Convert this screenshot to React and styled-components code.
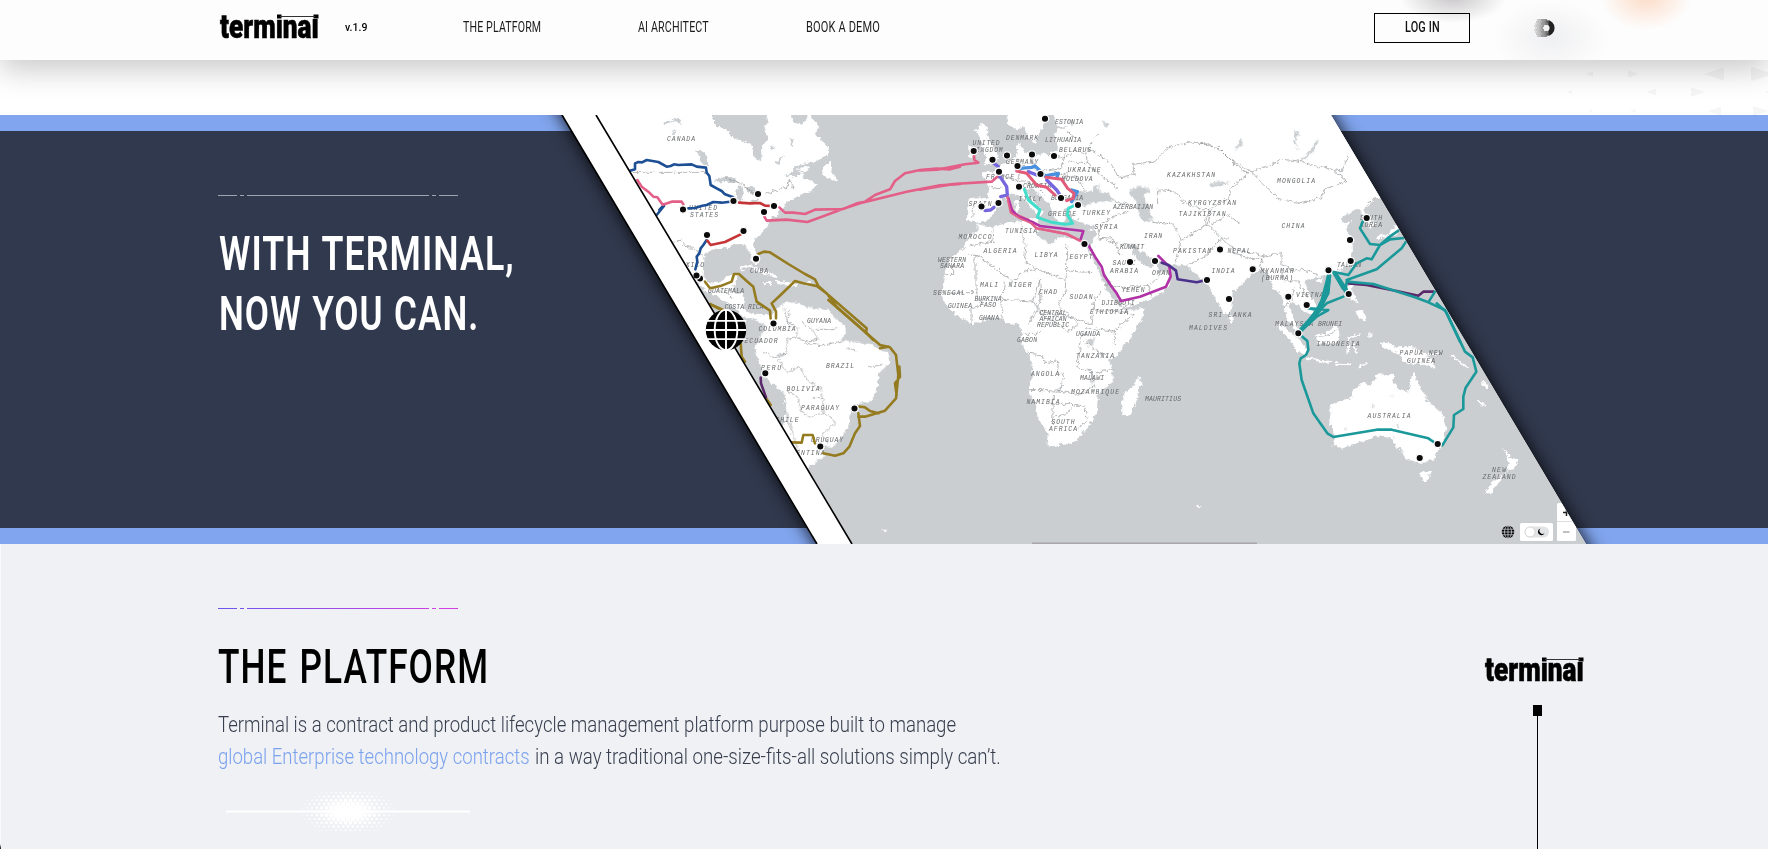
import React, { useLayoutEffect, useRef, useState } from "react";
import styled, { createGlobalStyle } from "styled-components";

const Global = createGlobalStyle`
  * { box-sizing: border-box; }
  body { margin: 0; background: #fff; overflow: hidden; font-family: Roboto, "Liberation Sans", sans-serif; }
  h1, h2, p { margin: 0; font-weight: inherit; }
`;

const Page = styled.div`
  width: 100%;
  height: 849px;
  display: flex;
  flex-direction: column;
  overflow: hidden;
`;

/* Condensed text: the glyphs are squeezed to the given width. */
const FitBox = styled.span`
  display: inline-block;
  width: ${(p) => p.$w}px;
  white-space: nowrap;
  text-align: left;
`;
const FitInner = styled.span`
  display: inline-block;
  transform-origin: 0 50%;
`;
function Fit({ w, children }) {
  const ref = useRef(null);
  const [scale, setScale] = useState(1);
  useLayoutEffect(() => {
    if (ref.current.offsetWidth) setScale(w / ref.current.offsetWidth);
  }, [w]);
  return (
    <FitBox $w={w}>
      <FitInner ref={ref} style={{ transform: `scaleX(${scale})` }}>{children}</FitInner>
    </FitBox>
  );
}

/* ---------- header ---------- */
const Header = styled.header`
  flex: none;
  height: 60px;
  padding: 0 0 6px 220px;
  display: flex;
  align-items: center;
  position: relative;
  z-index: 3;
  box-shadow: 0 10px 30px rgba(0, 0, 0, 0.21);
  background:
    radial-gradient(ellipse 54px 26px at 1453px -3px, rgba(150, 146, 150, 0.5), transparent),
    radial-gradient(ellipse 46px 34px at 1646px -4px, rgba(252, 205, 175, 0.7), transparent),
    radial-gradient(ellipse 58px 38px at 1551px 38px, rgba(230, 231, 234, 0.6), transparent),
    #fdfdfd;
`;
const LogoBox = styled.span`
  display: block;
  position: relative;
  width: 99px;
  height: 28px;
  font: 900 33px/28px Roboto, sans-serif;
  color: #000;
  -webkit-text-stroke: 0.6px #000;
`;
const LogoBar = styled.svg`
  position: absolute;
  left: 0;
  top: -2px;
`;
function Logo({ bg }) {
  return (
    <LogoBox>
      <Fit w={99}>terminal</Fit>
      <LogoBar width="101" height="30" viewBox="0 -2 101 30">
        <path d="M55 -2h8v8h-8zM88 -2h13v8H88z" fill={bg} />
        <path d="M57 1.500h4.500v4H57zM93.500 1.500h5v4h-5z" />
        <path d="M60 3.500H95" stroke="#333" />
      </LogoBar>
    </LogoBox>
  );
}
const Version = styled.span`
  margin-left: 26px;
  width: 96px;
  font-size: 11.5px;
  font-weight: 500;
`;
const Nav = styled.nav`
  display: flex;
  gap: 96.5px;
  margin-left: 22px;
  font-size: 14.3px;
  letter-spacing: 0.2px;
  color: #1c1c1c;
`;
const Login = styled.button`
  margin-left: auto;
  width: 96px;
  height: 30px;
  padding: 0 0 3px;
  margin-top: 2px;
  border: 1px solid #000;
  background: transparent;
  font: 500 14.3px Roboto, sans-serif;
  letter-spacing: 0.2px;
  color: #111;
`;
const Badge = styled.svg`
  display: block;
  margin: 2px 209px 0 61px;
`;
function HalftoneRing() {
  const dots = [];
  for (let y = 0; y < 9; y++)
    for (let x = 0; x < 7; x++) {
      const px = 3 + x * 2 + (y % 2);
      const py = 3 + y * 2;
      const d = Math.hypot(px - 15, py - 11);
      if (d < 11.5 && d > 3.6) dots.push(<circle key={`${x}-${y}`} cx={px} cy={py} r={0.35 + px * 0.05} />);
    }
  return (
    <Badge width="28" height="22" viewBox="0 0 28 22">
      <defs>
        <linearGradient id="ring"><stop offset="0.3" stopColor="#888" stopOpacity="0.1" /><stop offset="0.75" stopColor="#222" /></linearGradient>
      </defs>
      <g fill="#777">{dots}</g>
      <circle cx="15.500" cy="11" r="5.6" fill="none" stroke="url(#ring)" strokeWidth="5" />
    </Badge>
  );
}

const Gap = styled.div`
  flex: none;
  height: 55px;
  display: flex;
  justify-content: flex-end;
`;
function Arrows() {
  const list = [
    [1585, 74, 8, -1], [1628, 74, 11, 1], [1704, 74, 20, -1], [1751, 74, 22, 1],
    [1567, 92, 5, -1], [1646, 92, 10, -1], [1691, 92, 14, 1], [1765, 92, 5, -1],
    [1588, 111, 4, -1], [1630, 111, 6, -1], [1708, 111, 13, -1], [1753, 111, 15, 1],
  ];
  return (
    <svg width="228" height="55" viewBox="1540 60 228 55" fill="#f6f6f6">
      {list.map(([x, y, w, d], i) => (
        <path key={i} d={d > 0 ? `M${x} ${y - w / 3}V${y + w / 3}L${x + w} ${y}z` : `M${x + w} ${y - w / 3}V${y + w / 3}L${x} ${y}z`} />
      ))}
    </svg>
  );
}

/* ---------- hero ---------- */
const Hero = styled.section`
  flex: none;
  height: 429px;
  display: flex;
  overflow: hidden;
  background: linear-gradient(#81a5ee 16px, #31394e 16px, #31394e 413px, #81a5ee 413px);
`;
const HeroCopy = styled.div`
  flex: none;
  width: 540px;
  padding: 80px 0 0 218px;
`;
const HeroTitle = styled.h1`
  padding: 28px 0 0 1px;
  display: flex;
  flex-direction: column;
  font-size: 48px;
  line-height: 60px;
  font-weight: 600;
  letter-spacing: 1.4px;
  word-spacing: 1px;
  color: #fff;
`;
const RuleSvg = styled.svg`
  display: block;
`;
function Rule({ color }) {
  return (
    <RuleSvg width="240" height="1" fill={color} shapeRendering="crispEdges">
      <defs>
        <linearGradient id="violet" gradientUnits="userSpaceOnUse" x1="0" x2="240" y1="0" y2="0">
          <stop stopColor="#6b55ee" /><stop offset="1" stopColor="#d63fe0" />
        </linearGradient>
      </defs>
      <path d="M0 0h19v1H0zM22 0h4v1h-4zM29 0h182v1H29zM214 0h4v1h-4zM221 0h19v1h-19z" />
    </RuleSvg>
  );
}
const MapSvg = styled.svg`
  flex: none;
  display: block;
  overflow: visible;
`;
const MapLabel = styled.text`
  font: italic 6.4px "Liberation Mono", monospace;
  fill: #66686a;
  text-anchor: middle;
`;

const labels = [
  ["CANADA", 681, 139, 28], ["UNITED", 703, 207.5, 28], ["STATES", 704, 214.5, 28], ["MEXICO", 690, 265, 28],
  ["CUBA", 759, 271, 18], ["GUATEMALA", 726, 291, 36], ["COSTA RICA", 744, 307, 39], ["COLOMBIA", 777, 328.5, 37],
  ["GUYANA", 819, 321, 24], ["ECUADOR", 761, 341, 33], ["PERU", 771, 367.5, 20], ["BRAZIL", 840, 366, 28],
  ["BOLIVIA", 803, 388.5, 33], ["PARAGUAY", 820, 408, 38], ["CHILE", 787, 419.5, 23], ["URUGUAY", 827, 440, 32],
  ["ARGENTINA", 803, 452.5, 43], ["UNITED", 986, 142.5, 27], ["KINGDOM", 987, 150, 31], ["DENMARK", 1022, 137.5, 32],
  ["ESTONIA", 1069, 122, 28], ["LITHUANIA", 1063, 140, 36], ["BELARUS", 1075, 149.5, 32], ["GERMANY", 1022, 161.5, 32],
  ["UKRAINE", 1084, 169.5, 33], ["MOLDOVA", 1077, 178.5, 31], ["FRANCE", 1000, 176.5, 28], ["SPAIN", 980, 203.5, 23],
  ["ITALY", 1030, 198.5, 23], ["CROATIA", 1037, 186, 28], ["BULGARIA", 1067, 198, 32], ["GREECE", 1062, 214, 28],
  ["TURKEY", 1096, 212.5, 28], ["AZERBAIJAN", 1133, 207, 40], ["SYRIA", 1106, 227, 23], ["TUNISIA", 1021, 230.5, 32],
  ["MOROCCO", 975, 236.5, 33], ["ALGERIA", 1000, 251, 33], ["LIBYA", 1046, 255, 23], ["EGYPT", 1081, 256.5, 23],
  ["KUWAIT", 1132, 247, 24], ["IRAN", 1153, 235.5, 18], ["KAZAKHSTAN", 1191, 175, 48], ["KYRGYZSTAN", 1212, 203, 48],
  ["TAJIKISTAN", 1202, 213.5, 47], ["PAKISTAN", 1192, 250.5, 38], ["NEPAL", 1239, 250.5, 23], ["SAUDI", 1124, 262.5, 23],
  ["ARABIA", 1124, 270.5, 28], ["OMAN", 1161, 273, 18], ["INDIA", 1223, 270.5, 23], ["YEMEN", 1133, 289.5, 23],
  ["WESTERN", 952, 260, 28], ["SAHARA", 952, 265.5, 24], ["MALI", 989, 285, 18], ["NIGER", 1020, 285, 23],
  ["CHAD", 1048, 291.5, 18], ["SUDAN", 1081, 296.5, 23], ["SENEGAL", 949, 292.5, 32], ["BURKINA", 988, 298.5, 27],
  ["FASO", 988, 304.5, 16], ["GUINEA", 960, 305.5, 24], ["GHANA", 989, 317.5, 20], ["DJIBOUTI", 1118, 302.5, 33],
  ["ETHIOPIA", 1109, 312, 38], ["CENTRAL", 1053, 312.5, 27], ["AFRICAN", 1053, 318.5, 27], ["REPUBLIC", 1053, 324.5, 32],
  ["UGANDA", 1088, 334, 24], ["GABON", 1027, 339.5, 20], ["TANZANIA", 1095, 356, 38], ["SRI LANKA", 1230, 315, 43],
  ["MALDIVES", 1208, 328, 38], ["ANGOLA", 1045, 373.5, 28], ["MALAWI", 1092, 377.5, 24], ["MOZAMBIQUE", 1095, 391.5, 48],
  ["NAMIBIA", 1043, 401.5, 33], ["SOUTH", 1063, 421.5, 23], ["AFRICA", 1063, 429, 28], ["MAURITIUS", 1163, 398.5, 36],
  ["MONGOLIA", 1296, 180.5, 38], ["CHINA", 1293, 225.5, 23], ["MYANMAR", 1277, 270.5, 33], ["(BURMA)", 1277, 277.5, 32],
  ["SOUTH", 1371, 218, 22], ["KOREA", 1371, 224.5, 22], ["TAIWAN", 1349, 265, 24], ["VIETNAM", 1312, 294.5, 32],
  ["MALAYSIA", 1294, 324, 38], ["BRUNEI", 1330, 324, 24], ["INDONESIA", 1338, 344, 43], ["PAPUA NEW", 1421, 353, 43],
  ["GUINEA", 1421, 360.5, 28], ["AUSTRALIA", 1389, 416, 43], ["NEW", 1499, 470, 14], ["ZEALAND", 1499, 477, 33],
];

const ports = [
  [683, 209.5], [733.5, 201], [758, 194], [774, 206], [764, 212], [707, 235], [743.5, 231], [756, 258.7], [700, 278.5], [696.5, 275.5],
  [773.5, 323.5], [765.3, 373.3], [854.5, 408.5], [820.3, 446.5],
  [1045, 118.7], [973.7, 151], [992.5, 159.7], [1007, 155.5], [1032, 154.5], [1054, 156], [1017.5, 166], [999, 171.7], [1040.5, 174],
  [1019, 186.7], [998.5, 203], [981.5, 206.5], [1061, 198], [1078, 205], [1084.5, 244], [1130, 262], [1155, 261], [1220, 249.5],
  [1207, 280], [1229, 299], [1366.7, 218], [1350, 240], [1350.7, 261], [1328.5, 270.3], [1252.7, 269.3], [1288.3, 296.7],
  [1306.7, 305], [1348.7, 294], [1298.3, 333.3], [1437.7, 444], [1419.7, 458],
];

/* Outlines are drawn on sheets with three units to a map pixel. */
const Sheet = ({ x, y, children }) => <g transform={`translate(${x} ${y}) scale(.33333)`}>{children}</g>;

function Land() {
  return (
    <g fill="#fff" filter="url(#coast)">
      <Sheet x={540} y={110}>
        <path d="M60 0H519V42L550 52 580 80 630 100 638 130 650 153 662 145 660 110 680 85 668 50 680 35 672 0H740L755 30 778 44 800 15H808L832 45 822 70 860 105 862 130 820 152 775 160 745 190 790 168 808 172 783 185 790 200 828 218 815 238 780 250 760 262 735 275 725 292 712 300 708 315 690 320 680 345 650 375 636 395 642 425 652 455 640 460 625 425 610 400 580 400 560 412 520 410 495 425 487 450 485 490 500 515 540 520 555 495 588 490 590 505 575 530 580 545 605 545 612 570 605 590 625 605 660 610 700 612 690 640 655 620 620 622 600 610 580 590 540 565 500 545 460 510 300 300Z" />
        <path d="M850 165L870 148 870 172 888 208 870 205 840 190ZM700 15L720 0 760 0 745 22Z" />
        <path d="M598 475L625 466 660 480 705 497M668 517L690 518M705 512L770 522M790 517H808" fill="none" stroke="#fff" strokeWidth="8" />
      </Sheet>
      <Sheet x={640} y={300}>
        <path d="M300 35L345 45 385 65 400 25 430 8 470 5 500 20 560 25 580 50 610 75 612 100 600 118 650 122 700 135 745 160 748 185 715 215 710 260 690 300 655 305 630 330 625 370 590 420 570 440 545 435 548 465 520 490 500 500 480 490 425 380 435 330 430 275 385 245 365 210 345 165 340 140 360 110 372 75 350 60Z" />
        <path d="M724 685L735 687 742 696 732 692Z" />
      </Sheet>
      <Sheet x={920} y={110}>
        <path d="M170 340L205 350 250 338 300 330 345 330 355 345 348 370 385 400 420 375 450 380 480 395 505 398 500 415 520 455 560 540 590 580 615 600 668 590 665 620 630 680 585 735 563 745 575 780 575 810 530 850 528 900 505 945 460 995 420 1003 390 1010 378 995 380 970 350 925 345 880 322 840 335 785 325 730 300 695 300 655 290 640 255 635 240 622 200 625 155 640 110 615 75 585 60 555 65 520 70 490 90 440 130 410 140 380 170 355Z" />
        <path d="M655 795L662 820 640 880 625 915 605 915 602 880 608 845 635 825Z" />
        <path d="M140 265L150 258 200 262 205 225 185 195 180 180 215 185 235 165 265 150 285 135 290 105 300 95 308 120 330 132 380 130 410 118 400 75 410 50 440 50 400 40 402 0H1500V225L1375 262 1350 275 1328 295 1340 320 1365 340 1345 350 1325 325 1318 298 1295 298 1260 320 1262 335 1290 330 1275 355 1290 380 1293 420 1280 465 1225 495 1190 498 1160 505 1150 515 1170 550 1190 590 1170 610 1145 600 1130 580 1110 570 1102 590 1115 620 1140 665 1120 655 1095 615 1090 580 1080 550 1055 530 1045 500 1035 480 1000 480 970 510 935 545 930 600 912 610 890 575 870 540 855 510 820 490 800 465 720 455 690 440 660 420 640 400 625 402 645 440 665 460 690 470 700 455 720 480 750 490 740 530 700 560 640 580 605 590 595 560 570 520 540 470 510 420 510 400 525 370 525 345 485 335 455 320 440 290 425 295 435 320 420 340 400 315 385 280 360 255 335 230 310 235 330 260 350 285 365 300 355 318 330 290 300 255 280 250 245 265 225 290 210 320 190 330 165 338 138 325Z" />
        <path d="M255 0L262 40 285 55 305 45 325 88 342 95 365 50 372 0ZM165 60L185 35 200 60 195 75 220 115 235 145 220 155 185 162 200 140 185 120 180 90ZM145 105L168 110 170 130 145 142ZM320 322L350 322 345 335ZM284 270L294 270 294 305 284 305ZM925 600L938 620 932 635 920 625Z" />
        <path d="M418 355H450M505 360L525 353" fill="none" stroke="#fff" strokeWidth="6" />
        <path d="M825 1182L842 1186 830 1192Z" />
      </Sheet>
      <Sheet x={1200} y={110}>
        <path d="M528 385L535 370 560 372 590 335 600 345 585 370ZM450 448L460 450 455 475 447 468ZM440 520L455 520 458 555 475 575 450 568ZM460 600L485 595 495 630 475 625ZM345 505L365 500 362 515 348 515Z" />
      </Sheet>
      <Sheet x={1200} y={300}>
        <path d="M222 65L250 75 300 120 318 145 313 165 290 150 265 115 240 85ZM342 100L375 97 405 68 420 85 410 120 395 130 350 127ZM535 125L560 122 580 140 625 135 670 155 690 180 702 200 660 190 620 190 590 155 545 138Z" />
        <path d="M315 170L365 180 390 184M400 188L450 190M470 200L500 185M438 155L445 110 480 100M455 125L465 155M508 95V110M680 158L715 158M750 165L800 200M830 296L850 314M845 245L860 262" fill="none" stroke="#fff" strokeWidth="6" />
        <path d="M385 320L400 305 450 290 460 265 490 240 500 255 520 240 530 220 580 222 575 245 590 260 622 272 632 225 637 208 650 245 668 270 680 300 725 340 735 380 725 430 705 455 700 475 655 487 610 470 595 435 590 445 570 410 530 405 490 420 420 440 395 435 400 400 385 360ZM656 512L690 510 682 535 670 542ZM908 442L930 470 952 475 940 500 915 510 925 485ZM912 515L890 550 870 580 850 575 870 550Z" />
      </Sheet>
    </g>
  );
}

function Lakes() {
  return (
    <g fill="#caced1" filter="url(#coast)">
      <Sheet x={540} y={110}>
        <path d="M515 215L545 195 575 195 600 215 560 212ZM582 240L600 222 606 250 598 272 588 265ZM605 225L635 225 650 245 630 250ZM625 270L652 262 645 275ZM465 122L485 118 500 140 502 165 485 160 475 135ZM365 35L420 20 422 45 405 30 370 45ZM250 68L262 85 270 95ZM390 65L415 58 400 72ZM685 110L700 105 695 118ZM745 85L755 80 752 108ZM705 155L730 130 715 162ZM735 195L760 180 790 178 760 198Z" />
      </Sheet>
      <Sheet x={920} y={110}>
        <path d="M455 285L470 240 500 242 520 235 515 228 535 220 530 240 560 245 582 268 520 275 480 288ZM625 242L650 222 690 235 670 252 685 295 695 325 670 335 650 300 645 270ZM495 685L520 682 515 705 500 705ZM545 25L565 40 555 48ZM445 28L455 30 450 50Z" />
        <path d="M708 250L715 235 722 245ZM868 222L905 215 925 214 905 222 872 232Z" />
      </Sheet>
      <Sheet x={1200} y={110}>
        <path d="M345 85L350 92 330 130 300 150 295 145 325 125ZM280 55L295 70 285 80 292 118 280 95ZM30 218L75 214 50 222 28 232ZM120 85L125 98 100 120Z" />
      </Sheet>
      <Sheet x={1200} y={300}>
        <path d="M572 280L580 283 575 288ZM510 317L520 313 518 320ZM430 380L438 382 434 388ZM586 370L596 372 592 382ZM575 400L582 415 577 412Z" />
      </Sheet>
    </g>
  );
}

function Borders() {
  return (
    <g fill="none" stroke="#8a8e91" strokeWidth="2.3" strokeOpacity=".85" filter="url(#coast)">
      <Sheet x={540} y={110}>
        <path d="M275 184H498M400 390L420 388 440 410 460 412 485 435M670 250L735 232 745 205 758 235M550 200L600 215 640 250M535 540L560 545 570 560M745 600L740 640 760 655" />
      </Sheet>
      <Sheet x={640} y={300}>
        <path d="M430 20L435 60 470 75 465 110 440 115 435 155 395 170 360 150M470 110L500 120 530 115 520 90 480 60M530 85L560 85 590 80M435 155L410 175 440 215 475 195 500 240 540 260 550 310 545 335 510 350 480 330 465 280 440 270M545 335L575 350 580 370 545 400 560 430M510 290L545 290M435 330L465 430 480 480M490 125L540 135 600 120M620 140L645 150M680 200L720 190" />
      </Sheet>
      <Sheet x={920} y={110}>
        <path d="M437 400V480L515 485M437 480L432 540M350 475L310 480 275 510 165 430 145 430M315 400L310 450 350 475 432 505M165 430V545H80M250 515L245 565 335 570 355 510M245 565L240 620M165 545L185 580 150 590 150 640M335 570L350 590 320 640M355 500L360 560 350 600 440 660 470 640 410 580 435 540M360 600L450 620 510 640 520 570 540 540M520 600L570 600 640 610 580 660 490 650M580 660V700M300 670H345L380 640M325 730L365 735 370 755 410 750 412 790 430 790 415 840 322 838M412 840L470 850 515 830 510 780 470 770 480 690 495 660M395 880H450L490 885 500 930 470 950M397 850L395 940M395 920L430 910 470 880M510 780L525 830M525 785L575 775M490 695L565 740M215 350L220 390 145 405M300 335L310 400M70 490H95V445" />
        <path d="M205 225L245 235M215 180L290 210 300 160 285 140M290 210L340 220 370 250M300 160L360 180 420 170 430 130M330 130L340 170M380 130L430 140 460 120 495 130 500 160 445 150M430 190L470 200 490 240M400 180L440 200M530 70L500 110 560 150 600 200 640 190 635 160 700 150 740 110 800 95 870 100 900 120 950 170 985 190M710 240V280M620 300L590 310 540 340 530 380 600 400 640 400M580 270L620 280M690 330L760 340 780 390 760 460M780 390L860 340 870 300 800 280 760 240 710 235M870 340L920 310 960 340M800 460L850 440 890 390 920 380M550 520L620 530 680 520 690 560M690 520L720 490M160 275L155 320M530 385L570 380 600 430M460 85L440 60M500 160L590 230" />
      </Sheet>
      <Sheet x={1200} y={110}>
        <path d="M-5 95L50 110 90 150 150 180 200 165 250 145 290 150 360 170 420 180 440 135M150 180L185 220 230 262 300 275 360 260 370 235 435 210 400 180M150 180L90 230 85 260 30 290 10 330 50 370 90 410 190 435 240 425 240 460 280 480 300 475 350 490M90 410L100 430 190 450M190 435L175 470 210 500M245 480L250 510 290 510 320 560M500 275L532 262M250 590L275 560 280 530" />
      </Sheet>
      <Sheet x={1200} y={300}><path d="M345 108L390 100 410 80M623 135V190" /></Sheet>
    </g>
  );
}

function Routes() {
  return (
    <g fill="none" strokeLinejoin="round" strokeLinecap="round" strokeWidth="7.8">
      <Sheet x={540} y={110}>
        <path stroke="#1d4f94" d="M270 182L285 178V160L295 156 306 157 320 150 355 156 380 170 392 168 402 163 415 165 455 163 470 170 498 173 500 188 508 198 512 225 530 235 545 243 555 253 580 262M445 295L465 294 487 287 500 285 520 276 545 278 570 275M372 288L350 315M358 300L372 285M500 390L490 405 482 415 478 430 470 440 472 455 466 478" />
        <path stroke="#c53538" d="M597 278L630 280 660 279 675 287 695 288M502 392L512 405 555 396 608 370" />
        <path stroke="#e35f88" d="M292 210L305 230 325 245 340 260 352 262 368 284 395 275 425 275 430 283M718 292L735 308 760 308 795 312 825 299 910 297 950 280 975 275 1005 255 1050 238 1065 213 1095 190 1140 180 1190 176 1230 178 1260 170M673 320L680 332 740 329 802 336 910 296 960 280 1100 245 1200 226 1260 222" />
        <path stroke="#957b20" d="M655 432L672 425 690 427 745 462 795 492 825 508 835 528 865 555 980 655 978 670M495 515L510 535 545 527 575 515 582 492 597 492 620 513 640 530 650 575 690 602 692 625M708 625V605L695 580 725 552 765 513 790 520 830 528 860 550 890 590 975 665 1000 690M510 582L548 602" />
      </Sheet>
      <Sheet x={640} y={300}>
        <path stroke="#957b20" d="M215 15L250 30M302 130L305 170 315 185M565 0L680 100M675 95L720 135 750 142 768 165 775 225 768 295 735 332 675 350 655 350M778 200L780 230 765 250 770 285M658 320L675 322 690 333 715 340M720 145L745 140M655 340L660 378 645 400 628 440 610 460 585 467 550 460M450 427L485 428 490 405 518 405 525 430M378 295L392 315" />
        <path stroke="#5b286b" d="M362 233L363 250 378 292" />
      </Sheet>
      <Sheet x={920} y={110}>
        <path stroke="#e35f88" d="M0 181L50 179 135 163 175 158 163 150 162 135M0 239L100 222 215 215 232 200M262 260L280 310 325 330 350 355 440 372 480 392" />
        <path stroke="#7767df" strokeWidth="10" d="M222 160L235 170M240 200L260 230 262 255 242 260M195 302L212 300 222 292M325 185L350 195M380 210L410 240 420 255" />
        <path stroke="#4a90df" strokeWidth="10" d="M300 175L335 172 345 168 360 182 375 198M375 198L415 190 410 205M455 240L472 245 455 275" />
        <path stroke="#e25b78" strokeWidth="9" d="M290 183L320 190 350 225 380 232 405 255M378 202L425 208 443 235 462 250 460 265 440 272" />
        <path stroke="#42decb" strokeWidth="9" d="M313 238L325 270 360 300 352 322 395 337 435 343 458 340 442 315 445 295 462 287" />
        <path stroke="#b132a6" d="M265 265L275 300 295 320 335 335 360 348 490 363 482 388M505 405L525 440 545 470 552 495 575 530 590 550 603 573 660 560 738 530 752 500 748 470 715 438" />
        <path stroke="#e35f88" strokeWidth="6" d="M262 262L272 308 300 325 335 340 350 355 440 372 480 392" />
        <path stroke="#4b318b" d="M725 458L745 465 768 482 773 508 830 517 860 510" />
      </Sheet>
      <Sheet x={1200} y={110}>
        <path stroke="#5b286b" d="M445 520L500 525 590 543 655 557 670 545 700 545M415 510L440 550" />
        <path stroke="#1b999a" d="M488 335L480 355 510 402 540 405 565 383 595 362M445 495L470 460 500 445 515 448 540 405 570 388 612 384M440 510L530 478 605 415 618 395M398 485L445 495M440 515L520 522 645 562 685 577 705 545M685 577L735 600 780 695M400 487L428 535 445 545M440 515L435 545M385 495L365 570 350 600 300 665M390 495L385 550 350 610M430 560L380 580 310 650M330 595L385 600 350 620 300 665M325 595L350 600 370 570" />
        <path stroke="#1b999a" strokeWidth="13" d="M387 498L380 550 358 600 303 660M405 490L425 520 438 540" />
      </Sheet>
      <Sheet x={1200} y={300}>
        <path stroke="#1b999a" d="M295 100L322 123 325 150 318 165 302 175 298 190 305 240 340 340 382 400 400 411 530 389 575 389 685 415 710 432 727 436 760 382 762 345 790 327V290L797 263 829 215 818 172 795 155 738 35 710 10" />
      </Sheet>
    </g>
  );
}

function Globe({ cx, cy, r, line, bg }) {
  return (
    <g>
      <circle cx={cx} cy={cy} r={r} fill="#000" />
      <g fill="none" stroke={bg} strokeWidth={line}>
        <ellipse cx={cx} cy={cy} rx={r * 0.56} ry={r} />
        <path d={`M${cx} ${cy - r}V${cy + r}M${cx - r} ${cy}H${cx + r}M${cx - r} ${cy - r * 0.45}H${cx + r}M${cx - r} ${cy + r * 0.45}H${cx + r}`} />
      </g>
    </g>
  );
}

const Band = styled.path`
  filter: drop-shadow(0 0 9px rgba(0, 0, 0, 0.95));
`;

function RouteMap() {
  return (
    <MapSvg width="1080" height="429" viewBox="540 115 1080 429">
      <defs>
        <clipPath id="pane"><path d="M596 115H1331L1586 544H852Z" /></clipPath>
        <filter id="coast" x="0" y="0" width="1" height="1">
          <feTurbulence baseFrequency=".14" numOctaves="3" seed="4" result="n" />
          <feDisplacementMap in="SourceGraphic" in2="n" scale="5" xChannelSelector="R" yChannelSelector="G" />
        </filter>
      </defs>
      <Band d="M562 115L548 91H1317L1331 115L1586 544L1600 568H831L817 544Z" fill="#fff" />
      <g clipPath="url(#pane)">
        <rect x="590" y="115" width="1000" height="429" fill="#caced1" />
        <Land />
        <Lakes />
        <Borders />
        {labels.map(([t, x, y, w], i) => (
          <MapLabel key={i} x={x} y={y + 2.2} textLength={w} lengthAdjust="spacing">{t}</MapLabel>
        ))}
        <Routes />
        {ports.map(([x, y], i) => <circle key={i} cx={x} cy={y} r="3.7" fill="#0b0b0b" stroke="#fff" strokeWidth="1.3" />)}
        <rect x="1032" y="542.5" width="225" height="1.5" fill="#aaa5a8" />
        <Globe cx={1508} cy={532} r={6.2} line={0.8} bg="#caced1" />
        <rect x="1520" y="523" width="33" height="18" rx="1.5" fill="#fff" />
        <rect x="1524.500" y="526.500" width="24.500" height="11" rx="5.500" fill="#e2e3e4" />
        <circle cx="1530" cy="532" r="5" fill="#fff" stroke="#ccc" strokeWidth=".7" />
        <path d="M1540.500 528.500a3.400 3.400 0 1 0 4 4.500a3 3 0 0 1 -4 -4.500z" fill="#000" />
        <rect x="1557" y="503" width="19" height="38" rx="1.500" fill="#fff" />
        <path d="M1557 521.500h19" stroke="#ddd" />
        <path d="M1563 512.500h7M1566.500 509v7" stroke="#222" strokeWidth="1.500" />
        <path d="M1563 532h6.500" stroke="#aaa" strokeWidth="1.300" />
      </g>
      <path d="M562 115L817 544M596 115L852 544" stroke="#000" strokeWidth="1.600" fill="none" />
      <Globe cx={726} cy={330} r={20.2} line={1.9} bg="#fff" />
    </MapSvg>
  );
}

/* ---------- platform ---------- */
const Platform = styled.section`
  flex: 1;
  display: flex;
  justify-content: space-between;
  background:
    linear-gradient(#fafafb 300px, #222 304px) 0 0 / 1px 100% no-repeat,
    #f0f1f4;
  padding: 64px 184px 0 218px;
`;
const Column = styled.div`
  display: flex;
  flex-direction: column;
`;
const Title = styled.h2`
  margin-top: 28px;
  font-size: 48px;
  line-height: 60px;
  font-weight: 500;
  letter-spacing: 1.4px;
  word-spacing: 3px;
  color: #000;
`;
const Lead = styled.p`
  margin-top: 12px;
  font-size: 22px;
  line-height: 32px;
  font-weight: 300;
  color: #363e4e;
`;
const Line = styled.span`
  display: flex;
  gap: 5px;
`;
const Accent = styled.span`
  color: #7ba2ef;
`;
const BurstSvg = styled.svg`
  display: block;
  margin: 13px 0 0 8px;
`;
function Burst() {
  const dots = [];
  for (let j = -6; j <= 6; j++)
    for (let i = -11; i <= 11; i++) {
      const x = i * 4.8 + (j % 2 ? 2.4 : 0);
      const y = j * 3.75;
      const d = Math.hypot(x / 50, y / 24);
      if (d < 1) dots.push(<circle key={`${i},${j}`} cx={122 + x} cy={25.5 + y} r={Math.min(2.5, 2.9 * (1 - d) + 0.35)} />);
    }
  return <BurstSvg width="244" height="52" fill="#fff"><rect y="24.500" width="244" height="2" />{dots}</BurstSvg>;
}
const Aside = styled.div`
  display: flex;
  flex-direction: column;
  align-items: center;
  width: 99px;
  padding-top: 48px;
`;
const Node = styled.span`
  flex: none;
  width: 9px;
  height: 11px;
  margin: 21px 0 0 6px;
  background: #000;
`;
const Stem = styled.span`
  flex: 1;
  width: 1px;
  margin-left: 6px;
  background: #000;
`;

export default function App() {
  return (
    <Page>
      <Global />
      <Header>
        <Logo bg="#fdfdfd" />
        <Version><Fit w={22}>v.1.9</Fit></Version>
        <Nav>
          <Fit w={78.5}>THE PLATFORM</Fit>
          <Fit w={71}>AI ARCHITECT</Fit>
          <Fit w={74}>BOOK A DEMO</Fit>
        </Nav>
        <Login><Fit w={35}>LOG IN</Fit></Login>
        <HalftoneRing />
      </Header>
      <Gap><Arrows /></Gap>
      <Hero>
        <HeroCopy>
          <Rule color="#a0a4b0" />
          <HeroTitle>
            <Fit w={296}>WITH TERMINAL,</Fit>
            <Fit w={260}>NOW YOU CAN.</Fit>
          </HeroTitle>
        </HeroCopy>
        <RouteMap />
      </Hero>
      <Platform>
        <Column>
          <Rule color="url(#violet)" />
          <Title><Fit w={271}>THE PLATFORM</Fit></Title>
          <Lead>
            <Line><Fit w={738}>Terminal is a contract and product lifecycle management platform purpose built to manage</Fit></Line>
            <Line>
              <Accent><Fit w={312}>global Enterprise technology contracts</Fit></Accent>
              <Fit w={466}>in a way traditional one-size-fits-all solutions simply can’t.</Fit>
            </Line>
          </Lead>
          <Burst />
        </Column>
        <Aside>
          <Logo bg="#f0f1f4" />
          <Node />
          <Stem />
        </Aside>
      </Platform>
    </Page>
  );
}
